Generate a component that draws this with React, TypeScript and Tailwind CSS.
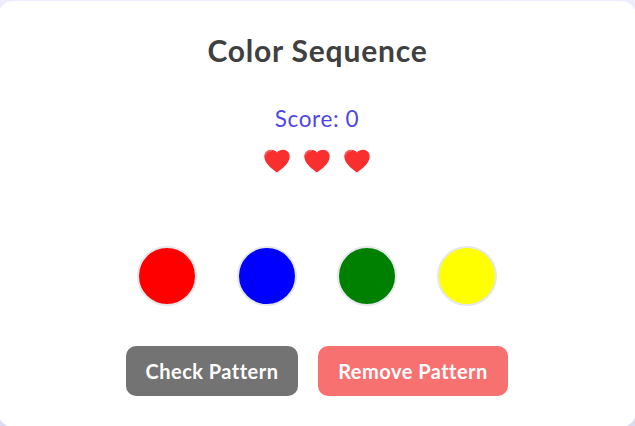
import React from "react";

const colors = ["bg-[#ff0000]", "bg-[#0000ff]", "bg-[#008000]", "bg-[#ffff00]"];

function Heart() {
  return (
    <svg width="26" height="24" viewBox="0 0 26 24" aria-hidden="true">
      <path
        d="M13 23.5C10 21.3 0.4 15.2 0.3 7.6C0.2 3.6 3 0.7 6.7 0.7C9.5 0.7 11.8 1.7 13 3.5C14.2 1.7 16.5 0.7 19.3 0.7C23 0.7 25.8 3.6 25.7 7.6C25.6 15.2 16 21.3 13 23.5Z"
        fill="#f92f2f"
      />
      <path d="M1.5 5.5C2.5 2.8 4.6 1.5 7.5 1.6" fill="none" stroke="#f98280" strokeWidth="1" strokeLinecap="round" />
    </svg>
  );
}

export default function App() {
  return (
    <div className="h-[426px] overflow-hidden bg-gradient-to-b from-[#eeedff] to-[#dcdcf0] pt-px font-['Lato','Noto_Sans',sans-serif]">
      <main className="-ml-[2px] flex h-[426px] w-[638px] flex-col items-center rounded-[15px] bg-white pt-[29px]">
        <h1 className="h-10 whitespace-nowrap pl-px text-[30px] font-bold leading-10 tracking-[0.8px] text-[#404040]">Color Sequence</h1>
        <p className="mt-[33px] h-8 whitespace-nowrap text-[22.5px] leading-8 tracking-[0.6px] text-[#4f46e5]">Score: 0</p>
        <div className="mt-[14px] flex gap-[14px]">
          <Heart />
          <Heart />
          <Heart />
        </div>
        <div className="mt-[73px] flex gap-10">
          {colors.map((color) => (
            <button key={color} aria-label="Color" className={`size-[60px] rounded-full border-2 border-gray-200 ${color}`} />
          ))}
        </div>
        <div className="mt-10 flex gap-5 text-[20px] font-bold tracking-[0.48px] text-white">
          <button className="h-[50px] w-[172px] whitespace-nowrap rounded-[10px] bg-[#737373] pb-px">Check Pattern</button>
          <button className="h-[50px] w-[190px] whitespace-nowrap rounded-[10px] bg-[#f87171] pb-px">Remove Pattern</button>
        </div>
      </main>
    </div>
  );
}
